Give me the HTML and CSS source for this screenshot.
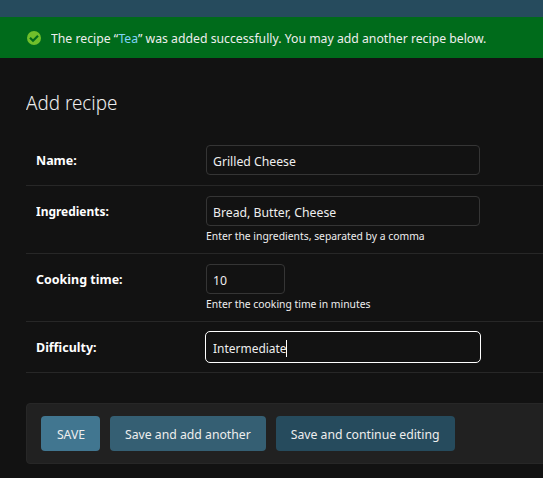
FILE: index.html
```html
<!DOCTYPE html>
<html lang="en">
<head>
<meta charset="utf-8">
<title>Add recipe</title>
<link rel="stylesheet" href="styles.css">
</head>
<body>
<div class="breadcrumbs"></div>
<div class="message">
<svg class="tick" viewBox="0 0 16 16"><circle cx="8" cy="8" r="7" fill="#70bf2b"/><path d="M4 7.8l3 3 5-5" fill="none" stroke="#006b1b" stroke-width="2.2"/></svg>
<span class="t">The recipe “<a>Tea</a>” was added successfully. You may add another recipe below.</span>
</div>
<main>
<h1><span class="t">Add recipe</span></h1>
<form>
<div class="row"><label><span class="t wide">Name:</span></label><div class="field"><div class="input"><span class="t">Grilled Cheese</span></div></div></div>
<div class="row help-row"><label><span class="t narrow">Ingredients:</span></label><div class="field"><div class="input"><span class="t">Bread, Butter, Cheese</span></div><div class="help"><span class="t">Enter the ingredients, separated by a comma</span></div></div></div>
<div class="row help-row"><label><span class="t wide">Cooking time:</span></label><div class="field"><div class="input short"><span class="t">10</span></div><div class="help"><span class="t">Enter the cooking time in minutes</span></div></div></div>
<div class="row"><label><span class="t wide">Difficulty:</span></label><div class="field"><div class="input focus"><span class="t narrow">Intermediate</span><i class="caret"></i></div></div></div>
<div class="submit"><button type="button" class="save"><span class="t">SAVE</span></button><button type="button" class="another"><span class="t">Save and add another</span></button><button type="button" class="continue"><span class="t">Save and continue editing</span></button></div>
</form>
</main>
</body>
</html>
```
FILE: styles.css
```css
* { box-sizing: border-box; }
body { margin: 0; width: 543px; height: 478px; overflow: hidden; background: #121212; color: #eee; font: 13px/18px "Noto Sans", sans-serif; }
.t { display: inline-block; white-space: nowrap; transform: scaleX(.941); transform-origin: left center; }
.t.wide { transform: scaleX(.96); }
.t.narrow { transform: scaleX(.92); }
.breadcrumbs { height: 17px; background: #264b5d; }
.message { display: flex; align-items: center; height: 41px; padding-left: 26px; background: #006b1b; }
.tick { width: 16px; height: 16px; margin-right: 9px; }
.message a { color: #81d4fa; }
main { padding-left: 26px; }
h1 { margin: 33px 0 0; height: 44px; font-size: 20px; line-height: 24px; font-weight: 300; }
.row { display: flex; height: 51px; padding: 10px 10px 0; border-bottom: 1px solid #272727; }
.help-row { height: 68px; }
label { width: 170px; padding-top: 6px; font-weight: 700; color: #fff; }
.input { display: flex; align-items: center; width: 274px; height: 30px; padding: 2px 6px 0; border: 1px solid #353535; border-radius: 4px; background: #121212; }
.short { width: 79px; }
.focus { border-color: #fff; box-shadow: none; width: 276px; height: 32px; margin: -1px 0 0 -1px; padding-left: 7px; border-radius: 5px; }
.caret { width: 1px; height: 17px; margin-left: -7px; background: #fff; }
.help { font-size: 11px; line-height: 14px; margin-top: 3px; }
.submit { display: flex; gap: 10px; width: 530px; height: 61px; margin-top: 30px; padding: 12px 14px; background: #212121; border: 1px solid #272727; border-radius: 4px; }
button { height: 35px; padding: 0; border: 0; border-radius: 4px; color: #eee; font: inherit; }
button .t { transform-origin: center; }
.save { width: 59px; background: #417690; }
.another { width: 156px; background: #355f73; }
.continue { width: 179px; background: #264b5d; }
```
